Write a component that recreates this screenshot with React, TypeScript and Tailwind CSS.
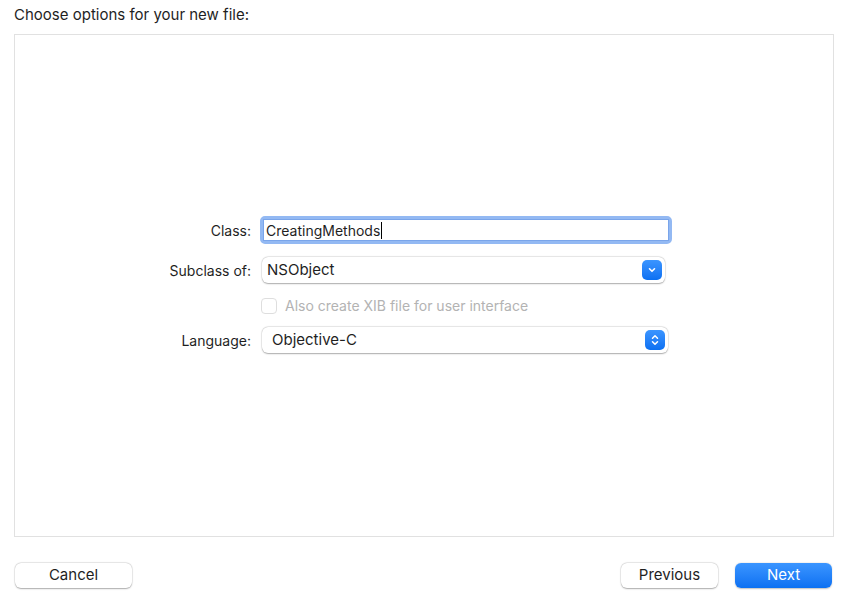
import React from 'react'

const font = { fontFamily: '"Inter", "Liberation Sans", sans-serif' }

function Chevron() {
  return (
    <svg width="10" height="10" viewBox="0 0 10 10" fill="none">
      <path d="M2.5 3.8 L5 6.3 L7.5 3.8" stroke="white" strokeWidth="1.6" strokeLinecap="round" strokeLinejoin="round" />
    </svg>
  )
}

function Stepper() {
  return (
    <svg width="10" height="14" viewBox="0 0 10 14" fill="none">
      <path d="M2.5 5.2 L5 2.7 L7.5 5.2" stroke="white" strokeWidth="1.5" strokeLinecap="round" strokeLinejoin="round" />
      <path d="M2.5 8.8 L5 11.3 L7.5 8.8" stroke="white" strokeWidth="1.5" strokeLinecap="round" strokeLinejoin="round" />
    </svg>
  )
}

function Popup({ value, width, icon }: { value: string; width: string; icon: React.ReactNode }) {
  return (
    <div
      className={`flex h-[26px] items-center justify-between rounded-[6px] bg-white pl-[5px] pr-[3px] shadow-[0_0.5px_1.5px_rgba(0,0,0,0.3),0_0_0_0.5px_rgba(0,0,0,0.08)] ${width}`}
    >
      <span className="text-[15px] text-[#1f1f1f]">{value}</span>
      <span className="flex h-[20px] w-[20px] items-center justify-center rounded-[5px] bg-gradient-to-b from-[#3b95ff] to-[#0a70f2]">
        {icon}
      </span>
    </div>
  )
}

export default function App() {
  return (
    <div className="min-h-[607px] w-[850px] bg-white text-[#1f1f1f]" style={font}>
      <div className="pl-[14px] pt-[5px] text-[15px] leading-[20px]">Choose options for your new file:</div>

      <div className="ml-[14px] mt-[9px] h-[503px] w-[820px] border border-[#e1e1e1] bg-white pt-[181px]">
        <div className="grid grid-cols-[236px_412px] items-center gap-x-[9px]">
          <div className="text-right text-[14px]">Class:</div>
          <div className="h-[28px] rounded-[5px] border-[3px] border-[#93b9f3] bg-white">
            <div className="flex h-full items-center border border-[#7aa5ea] bg-white pl-[2px] text-[14px]">
              CreatingMethods
              <span className="ml-[1px] inline-block h-[17px] w-[1px] bg-black" />
            </div>
          </div>

          <div className="mt-[13px] text-right text-[14px]">Subclass of:</div>
          <div className="mt-[13px] pl-[2px]">
            <Popup value="NSObject" width="w-[403px]" icon={<Chevron />} />
          </div>

          <div className="mt-[12px]" />
          <div className="mt-[12px] flex items-center gap-[8px] pl-[1px]">
            <span className="h-[16px] w-[16px] rounded-[4px] border border-[#dedede] bg-white" />
            <span className="text-[14px] text-[#b3b3b3]">Also create XIB file for user interface</span>
          </div>

          <div className="mt-[11px] text-right text-[14px]">Language:</div>
          <div className="mt-[11px] pl-[2px]">
            <Popup value=" Objective-C" width="w-[406px] pl-[10px]" icon={<Stepper />} />
          </div>
        </div>
      </div>

      <div className="mt-[26px] flex items-center justify-between pl-[15px] pr-[18px]">
        <button className="h-[25px] w-[117px] rounded-[6px] bg-white text-[15px] text-[#1f1f1f] shadow-[0_0.5px_1.5px_rgba(0,0,0,0.3),0_0_0_0.5px_rgba(0,0,0,0.08)]">
          Cancel
        </button>
        <div className="flex items-center gap-[17px]">
          <button className="h-[25px] w-[97px] rounded-[6px] bg-white text-[15px] text-[#1f1f1f] shadow-[0_0.5px_1.5px_rgba(0,0,0,0.3),0_0_0_0.5px_rgba(0,0,0,0.08)]">
            Previous
          </button>
          <button className="h-[25px] w-[97px] rounded-[6px] bg-gradient-to-b from-[#3a95ff] to-[#0a70f2] text-[15px] text-white shadow-[0_0.5px_1.5px_rgba(0,0,0,0.25)]">
            Next
          </button>
        </div>
      </div>
    </div>
  )
}
